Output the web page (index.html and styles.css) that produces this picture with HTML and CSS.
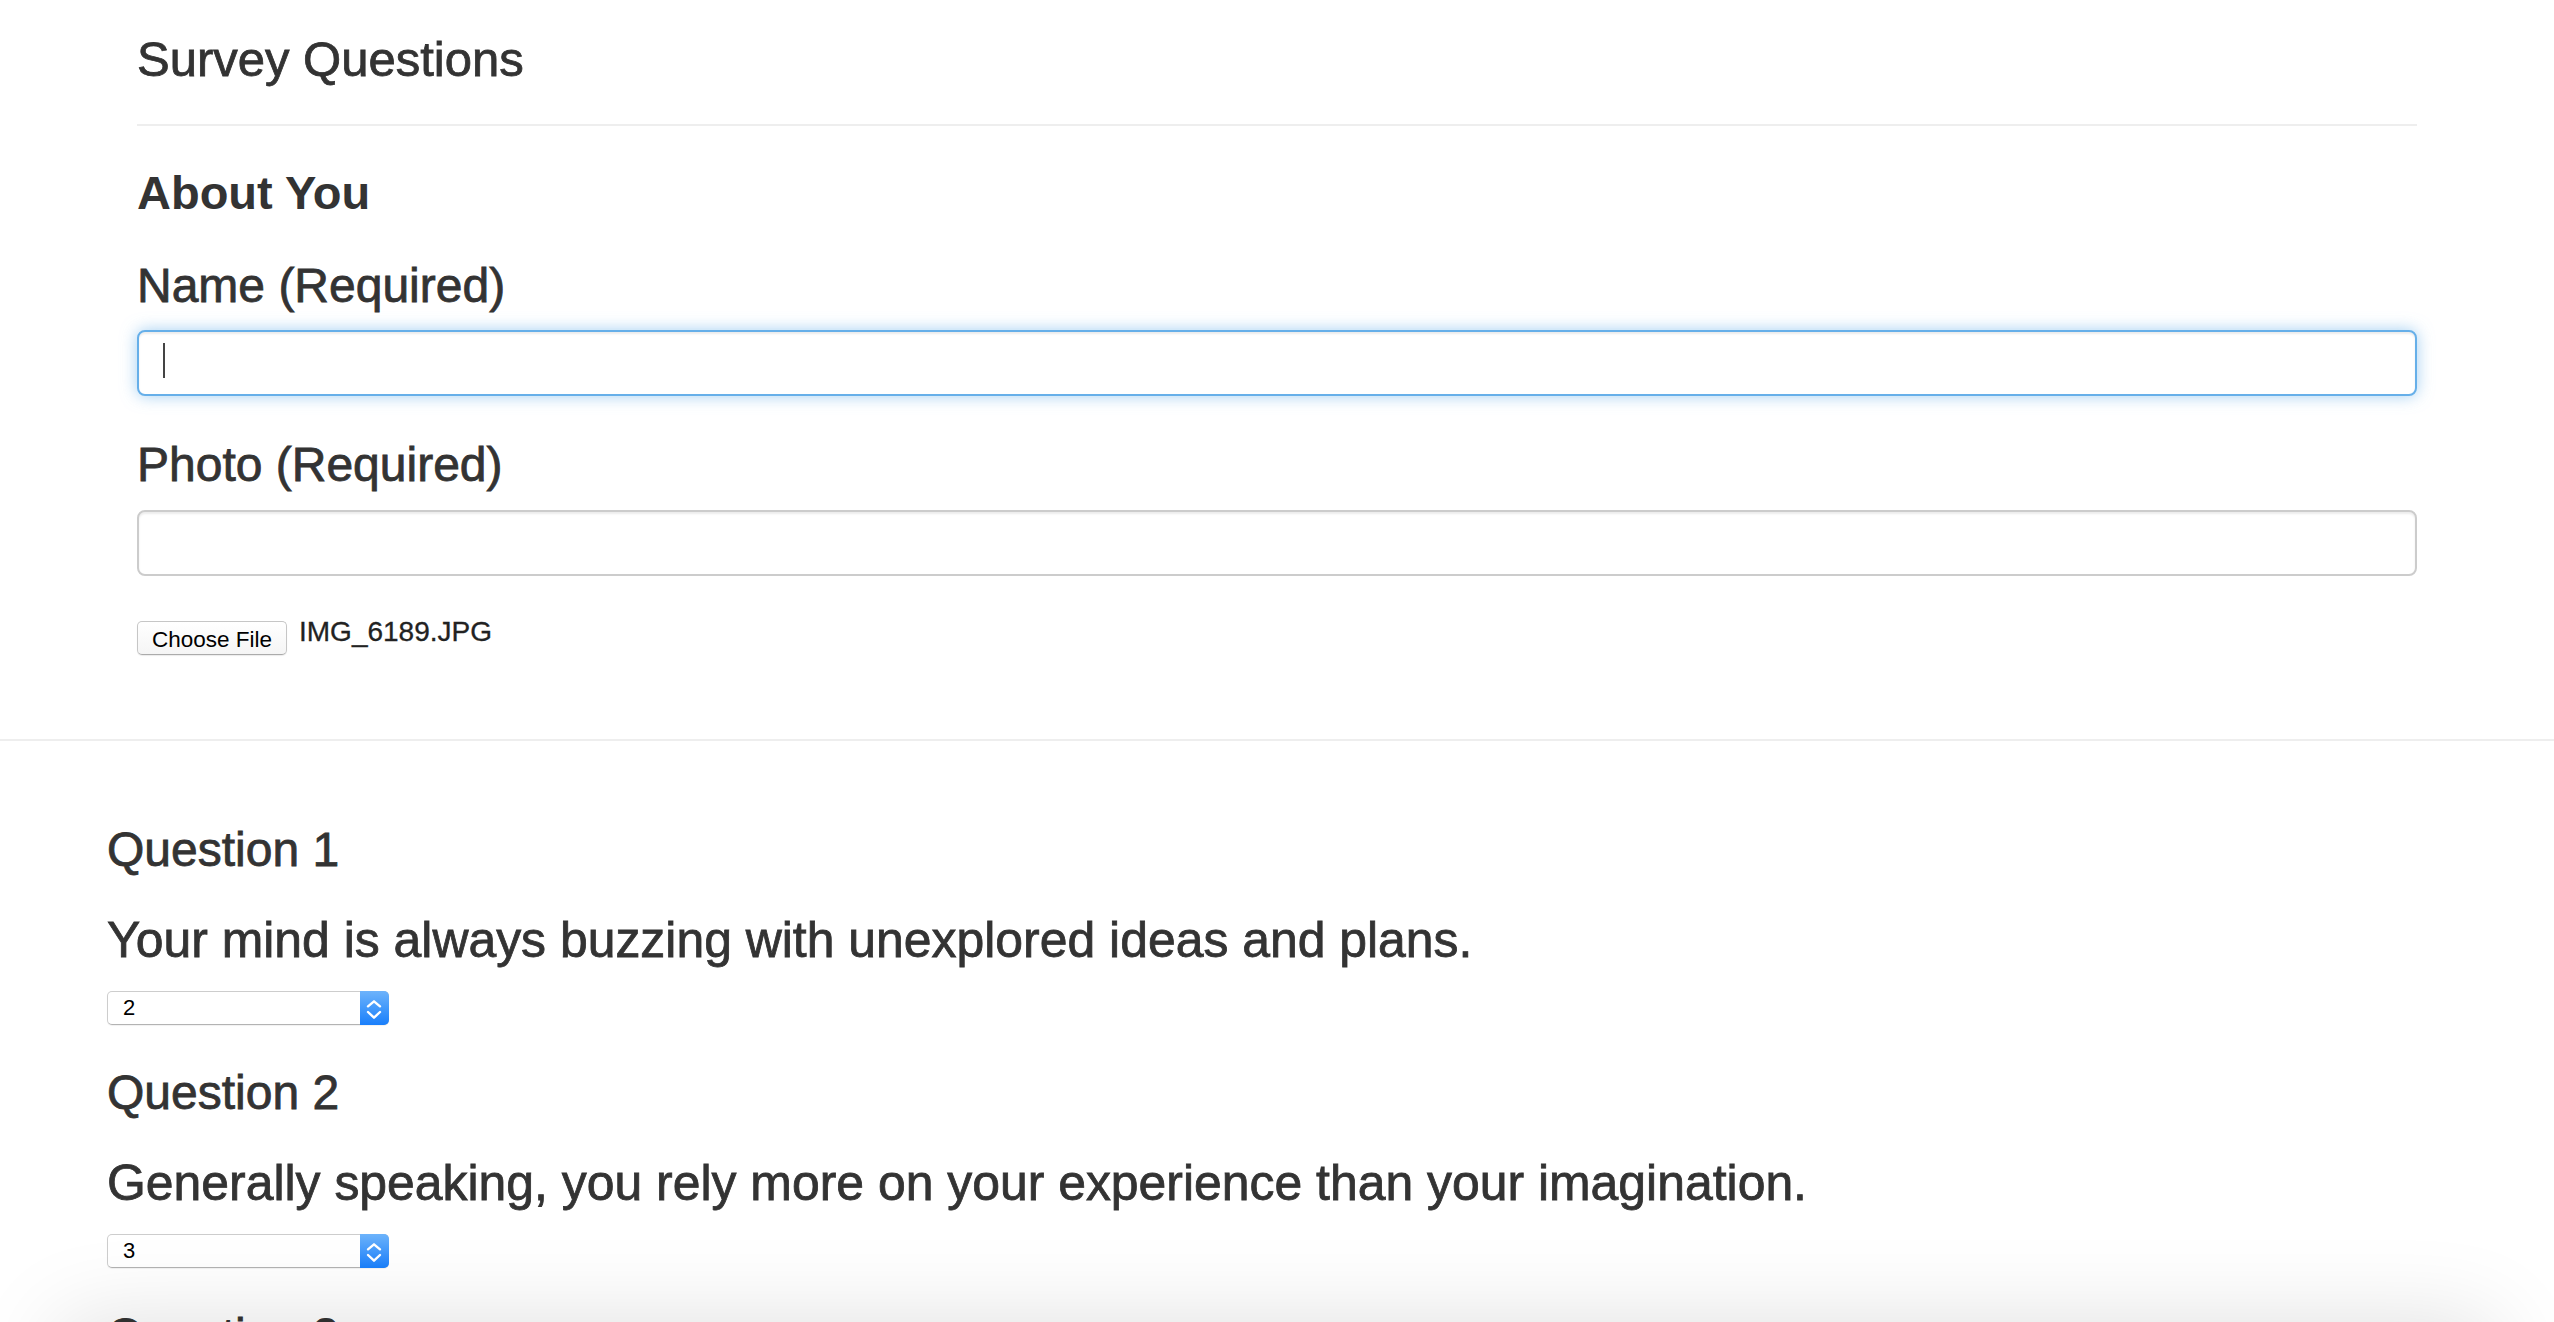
FILE: index.html
```html
<!DOCTYPE html>
<html lang="en">
<head>
<meta charset="utf-8">
<title>Survey Questions</title>
<link rel="stylesheet" href="styles.css">
</head>
<body>
  <section class="about">
    <h3 class="page-title">Survey Questions</h3>
    <hr class="title-rule">
    <h3 class="about-title">About You</h3>

    <label class="field-label">Name (Required)</label>
    <div class="text-input is-focused"><span class="caret"></span></div>

    <label class="field-label photo-label">Photo (Required)</label>
    <div class="text-input"></div>

    <div class="file-row">
      <span class="file-button">Choose File</span>
      <span class="file-name">IMG_6189.JPG</span>
    </div>
  </section>

  <hr class="section-rule">

  <section class="questions">
    <div class="question">
      <h3 class="q-title">Question 1</h3>
      <p class="q-text">Your mind is always buzzing with unexplored ideas and plans.</p>
      <div class="select">
        <span class="select-value">2</span>
        <span class="select-arrow">
          <svg width="29" height="32" viewBox="0 0 29 32"><path d="M8 14.3 L14 9.3 L20 14.3 M8 20 L14 25.7 L20 20" fill="none" stroke="#fff" stroke-width="2.4" stroke-linecap="round" stroke-linejoin="round"/></svg>
        </span>
      </div>
    </div>

    <div class="question">
      <h3 class="q-title">Question 2</h3>
      <p class="q-text">Generally speaking, you rely more on your experience than your imagination.</p>
      <div class="select">
        <span class="select-value">3</span>
        <span class="select-arrow">
          <svg width="29" height="32" viewBox="0 0 29 32"><path d="M8 14.3 L14 9.3 L20 14.3 M8 20 L14 25.7 L20 20" fill="none" stroke="#fff" stroke-width="2.4" stroke-linecap="round" stroke-linejoin="round"/></svg>
        </span>
      </div>
    </div>

    <div class="question">
      <h3 class="q-title">Question 3</h3>
    </div>
  </section>

  <div class="bottom-shade"></div>
</body>
</html>
```

FILE: styles.css
```css
html, body {
  margin: 0;
  padding: 0;
  background: #fff;
}

body {
  font-family: "Liberation Sans", Helvetica, Arial, sans-serif;
  color: #333;
  overflow: hidden;
}

.about {
  padding: 0 137px;
  display: flex;
  flex-direction: column;
}

.page-title,
.field-label,
.q-title,
.q-text {
  -webkit-text-stroke: 0.8px #333;
}

.page-title {
  margin: 33px 0 0;
  font-size: 49px;
  font-weight: normal;
  line-height: 1.1;
}

.title-rule {
  margin: 37px 0 0;
  border: 0;
  border-top: 2px solid #eee;
  height: 0;
}

.about-title {
  margin: 41px 0 0;
  font-size: 47px;
  font-weight: bold;
  line-height: 1.1;
}

.field-label {
  display: block;
  margin-top: 41px;
  font-size: 48px;
  line-height: 1.1;
  font-weight: normal;
}

.photo-label {
  margin-top: 43px;
}

.text-input {
  box-sizing: border-box;
  margin-top: 18px;
  height: 66px;
  border: 2px solid #ccc;
  border-radius: 8px;
  background: #fff;
  box-shadow: inset 0 2px 2px rgba(0, 0, 0, 0.075);
  display: flex;
  align-items: center;
  padding: 0 24px;
}

.text-input.is-focused {
  border-color: #66afe9;
  box-shadow: inset 0 2px 2px rgba(0, 0, 0, 0.075), 0 0 16px rgba(102, 175, 233, 0.6);
}

.caret {
  width: 2px;
  height: 35px;
  margin-top: -5px;
  background: #444;
}

.file-row {
  margin-top: 45px;
  display: flex;
  align-items: flex-start;
  gap: 12px;
}

.file-button {
  box-sizing: border-box;
  height: 34px;
  width: 150px;
  padding: 2px 0 0;
  text-align: center;
  font-size: 22.5px;
  line-height: 31px;
  color: #000;
  background: linear-gradient(#ffffff, #f5f5f5);
  border: 1px solid #c6c6c6;
  border-bottom-color: #ababab;
  border-radius: 5px;
  box-shadow: 0 1px 1px rgba(0, 0, 0, 0.08);
}

.file-name {
  font-size: 28px;
  line-height: 22px;
  color: #222;
  -webkit-text-stroke: 0.3px #222;
}

.section-rule {
  margin: 84px 0 0;
  border: 0;
  border-top: 2px solid #eee;
  height: 0;
}

.questions {
  padding: 0 107px;
  display: flex;
  flex-direction: column;
}

.question {
  display: flex;
  flex-direction: column;
  align-items: flex-start;
  margin-top: 42px;
}

.question:first-child {
  margin-top: 83px;
}

.q-title {
  margin: 0;
  font-size: 48px;
  font-weight: normal;
  line-height: 1.1;
}

.q-text {
  margin: 36px 0 0;
  font-size: 49.9px;
  line-height: 1.1;
}

.select {
  box-sizing: border-box;
  margin-top: 23px;
  width: 282px;
  height: 34px;
  display: flex;
  border: 1px solid #cdcdcd;
  border-bottom-color: #b3b3b3;
  border-radius: 5px;
  background: #fff;
  box-shadow: 0 1px 1px rgba(0, 0, 0, 0.06);
}

.select-value {
  flex: 1;
  padding-left: 15px;
  font-size: 22px;
  line-height: 32px;
  color: #000;
}

.select-arrow {
  width: 29px;
  margin: -1px -1px -1px 0;
  display: flex;
  align-items: center;
  justify-content: center;
  border-radius: 0 5px 5px 0;
  background: linear-gradient(#6db3fb, #197ffb);
}

.select-arrow svg {
  display: block;
}

.bottom-shade {
  position: fixed;
  left: 60px;
  right: 60px;
  bottom: -200px;
  height: 200px;
  box-shadow: 0 0 90px rgba(0, 0, 0, 0.13);
  pointer-events: none;
}
```
